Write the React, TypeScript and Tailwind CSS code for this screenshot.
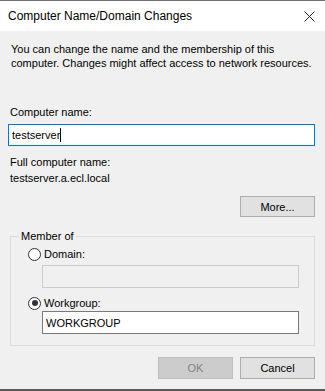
import React from 'react';

function Radio({ checked }: { checked: boolean }) {
  return (
    <span className="relative inline-block w-[13px] h-[13px] rounded-full border border-[#333333] bg-white">
      {checked && <span className="absolute left-[2.5px] top-[2.5px] w-[6px] h-[6px] rounded-full bg-[#333333]" />}
    </span>
  );
}

export default function App() {
  return (
    <div
      className="w-[325px] h-[391px] flex flex-col bg-[#f0f0f0] text-black border-t border-[#707070] border-b-2 border-b-[#575757] text-[11px] leading-[14px]"
      style={{ fontFamily: '"Liberation Sans", Arial, sans-serif' }}
    >
      <div className="h-[30px] bg-white flex items-center justify-between pl-[8px] pr-[10px]">
        <span className="text-[12px]">Computer Name/Domain Changes</span>
        <svg width="11" height="11" viewBox="0 0 11 11">
          <path d="M0.5 0.5 L10.5 10.5 M10.5 0.5 L0.5 10.5" stroke="#222" strokeWidth="1" />
        </svg>
      </div>

      <div className="flex flex-col px-[8px]">
        <p className="mt-[11px] px-[3px] leading-[14px]">
          You can change the name and the membership of this computer. Changes might affect access to network resources.
        </p>

        <div className="mt-[35px] px-[2px]">Computer name:</div>
        <div className="mt-[5px] h-[22px] w-[307px] bg-white border border-[#0078d7] flex items-center px-[3px]">
          <span>testserver</span>
          <span className="w-px h-[14px] bg-black" />
        </div>

        <div className="mt-[9px] px-[2px]">Full computer name:</div>
        <div className="mt-[2px] px-[2px]">testserver.a.ecl.local</div>

        <div className="mt-[11px] flex justify-end pr-[2px]">
          <div className="w-[75px] h-[21px] border border-[#adadad] bg-[#e1e1e1] flex items-center justify-center">
            More...
          </div>
        </div>

        <div className="relative mt-[19px] mx-[2px] h-[110px] border border-[#dcdcdc] pt-[10px] pl-[17px]">
          <span className="absolute -top-[8px] left-[8px] bg-[#f0f0f0] px-[2px]">Member of</span>
          <label className="flex items-center gap-[3px]">
            <Radio checked={false} />
            <span>Domain:</span>
          </label>
          <div className="mt-[4px] ml-[14px] w-[257px] h-[23px] border border-[#cccccc] bg-[#f0f0f0]" />
          <label className="mt-[8px] flex items-center gap-[3px]">
            <Radio checked={true} />
            <span>Workgroup:</span>
          </label>
          <div className="mt-[1px] ml-[14px] w-[257px] h-[23px] border border-[#7a7a7a] bg-white flex items-center px-[3px]">
            WORKGROUP
          </div>
        </div>

        <div className="mt-[11px] flex justify-end gap-[7px] pr-[2px]">
          <div className="w-[75px] h-[22px] border border-[#bfbfbf] bg-[#cccccc] text-[#838383] flex items-center justify-center">
            OK
          </div>
          <div className="w-[75px] h-[22px] border border-[#adadad] bg-[#e1e1e1] flex items-center justify-center">
            Cancel
          </div>
        </div>
      </div>
    </div>
  );
}
